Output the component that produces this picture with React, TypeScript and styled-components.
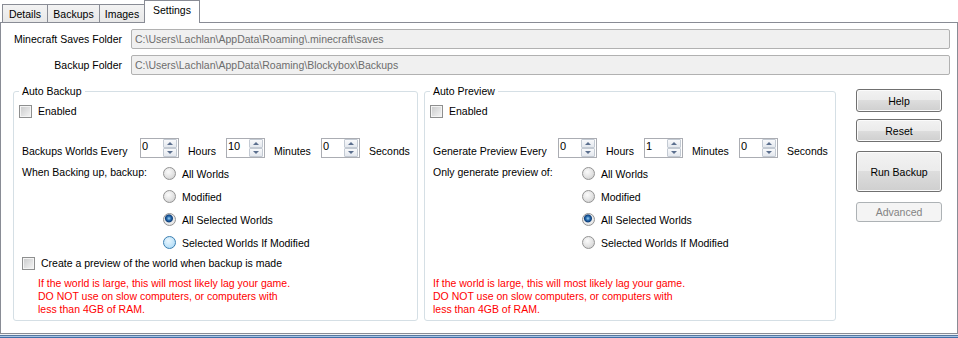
import React from 'react';
import styled, { createGlobalStyle, css } from 'styled-components';

const FONT_SIZE = '10.5px';

const GlobalStyle = createGlobalStyle`
  html, body { margin: 0; padding: 0; background: #fff; }
  body { font-family: "Liberation Sans", Arial, sans-serif; font-size: ${FONT_SIZE}; color: #000; }
  * { box-sizing: border-box; }
`;

const Window = styled.div`
  width: 958px;
  height: 338px;
  background: #fff;
  display: flex;
  flex-direction: column;
  overflow: hidden;
`;

const TabStrip = styled.div`
  height: 22px;
  display: flex;
  align-items: flex-end;
  padding-left: 2px;
  position: relative;
  z-index: 1;
`;

const Tab = styled.div<{ $active?: boolean; $w: number }>`
  width: ${p => p.$w}px;
  height: 18px;
  margin-left: -1px;
  border: 1px solid #898c95;
  border-bottom: none;
  background: linear-gradient(#f3f3f3, #e8e8e8);
  display: flex;
  align-items: center;
  justify-content: center;
  line-height: 13px;
  padding-top: 1px;
  &:first-child { margin-left: 0; }
  ${p =>
    p.$active &&
    css`
      height: 23px;
      margin-bottom: -1px;
      background: #fff;
      padding-top: 0;
      padding-bottom: 3px;
    `}
`;

const Panel = styled.div`
  height: 312px;
  border: 1px solid #898c95;
  padding: 6px 7px 12px 12px;
  display: flex;
  flex-direction: column;
`;

const FieldGrid = styled.div`
  display: grid;
  grid-template-columns: 109px 1fr;
  column-gap: 9px;
  row-gap: 6px;
`;

const FieldLabel = styled.div`
  line-height: 20px;
  text-align: right;
  white-space: nowrap;
`;

const PathBox = styled.div`
  height: 20px;
  border: 1px solid #b1b1b1;
  border-radius: 2px;
  background: #f0f0f0;
  color: #6d6d6d;
  padding-left: 3px;
  line-height: 18px;
  white-space: nowrap;
`;

const MainRow = styled.div`
  margin-top: 10px;
  flex: 1;
  display: flex;
  align-items: stretch;
`;

const GroupBox = styled.fieldset<{ $w: number; $ml?: number }>`
  width: ${p => p.$w}px;
  margin: 0 0 0 ${p => p.$ml ?? 0}px;
  padding: 0 0 4px 0;
  min-width: 0;
  border: 1px solid #d5dfe5;
  border-radius: 3px;
  display: flex;
  flex-direction: column;
`;

const Legend = styled.legend`
  margin-left: 5px;
  padding: 0 3px;
  line-height: 13px;
  font-size: ${FONT_SIZE};
`;

const CheckRow = styled.label<{ $mt: number; $pl: number }>`
  display: flex;
  align-items: center;
  gap: 6px;
  height: 13px;
  line-height: 13px;
  margin-top: ${p => p.$mt}px;
  padding-left: ${p => p.$pl}px;
  white-space: nowrap;
`;

const CheckBox = styled.span`
  width: 13px;
  height: 13px;
  flex: none;
  border: 1px solid #8e8f8f;
  background: linear-gradient(135deg, #c8c9ca, #f6f6f6);
  box-shadow: inset 0 0 0 1px #f4f4f4;
`;

const SpinRow = styled.div`
  display: flex;
  align-items: flex-start;
  margin-top: 20px;
  padding-left: 8px;
`;

const RowLabel = styled.div<{ $w: number; $lh?: number; $mt?: number }>`
  width: ${p => p.$w}px;
  flex: none;
  line-height: ${p => p.$lh ?? 13}px;
  margin-top: ${p => p.$mt ?? 0}px;
  white-space: nowrap;
`;

const Unit = styled.div<{ $w?: number }>`
  ${p => (p.$w ? `width: ${p.$w}px;` : '')}
  flex: none;
  margin-left: 9px;
  margin-top: 7px;
  line-height: 13px;
  white-space: nowrap;
`;

const Spinner = styled.div`
  width: 39px;
  height: 20px;
  flex: none;
  border: 1px solid #abadb3;
  background: #fff;
  display: flex;
`;

const SpinValue = styled.div`
  flex: 1;
  padding: 1px 0 0 1px;
  line-height: 13px;
  font-size: 11px;
`;

const SpinButtons = styled.div`
  width: 15px;
  padding: 0 1px 0 0;
  display: flex;
  flex-direction: column;
`;

const SpinHalf = styled.div<{ $down?: boolean }>`
  flex: 1;
  border: 1px solid #c3cad3;
  border-radius: 1px;
  background: linear-gradient(#f8f9fb, #e4e8ee);
  display: flex;
  align-items: center;
  justify-content: center;
  &::after {
    content: '';
    width: 0;
    height: 0;
    border-left: 3px solid transparent;
    border-right: 3px solid transparent;
    ${p =>
      p.$down
        ? 'border-top: 3px solid #5b6f8e;'
        : 'border-bottom: 3px solid #5b6f8e;'}
  }
`;

const RadioSection = styled.div`
  display: flex;
  align-items: flex-start;
  margin-top: 4px;
  padding-left: 8px;
`;

const RadioList = styled.div`
  display: flex;
  flex-direction: column;
`;

const RadioItem = styled.label`
  display: flex;
  align-items: center;
  gap: 6px;
  height: 23px;
  white-space: nowrap;
`;

const RadioDot = styled.span<{ $checked?: boolean; $hot?: boolean }>`
  width: 13px;
  height: 13px;
  flex: none;
  border-radius: 50%;
  border: 1px solid #939393;
  background: radial-gradient(circle at 40% 35%, #fbfbfb 0%, #e2e2e2 55%, #c6c6c6 100%);
  ${p =>
    p.$checked &&
    css`
      background: radial-gradient(circle at 45% 40%, #9ed4f5 0px, #2a6db0 2px, #0e3f7a 3.5px, #ececec 4.5px, #dedede 100%);
    `}
  ${p =>
    p.$hot &&
    css`
      border-color: #3c7fb1;
      background: radial-gradient(circle at 40% 35%, #eaf6fd 0%, #bfe3f9 60%, #9fd2f3 100%);
    `}
`;

const Warning = styled.div<{ $pl: number }>`
  margin-top: auto;
  padding-left: ${p => p.$pl}px;
  color: #ff0000;
  line-height: 13px;
  white-space: nowrap;
`;

const ButtonColumn = styled.div`
  width: 86px;
  margin-left: 20px;
  padding-top: 4px;
  display: flex;
  flex-direction: column;
`;

const Button = styled.button<{ $h: number; $mt?: number }>`
  height: ${p => p.$h}px;
  margin-top: ${p => p.$mt ?? 0}px;
  border: 1px solid #707070;
  border-radius: 3px;
  background: linear-gradient(#f2f2f2 0%, #ebebeb 50%, #dddddd 50%, #cfcfcf 100%);
  box-shadow: inset 0 0 0 1px #fbfbfb;
  font-family: "Liberation Sans", Arial, sans-serif;
  font-size: ${FONT_SIZE};
  font-weight: 400;
  color: #000;
  padding: 0;
  &:disabled {
    border-color: #adb2b5;
    background: #f4f4f4;
    box-shadow: none;
    color: #838383;
  }
`;

const FrameEdge = styled.div`
  height: 4px;
  flex: none;
  background: linear-gradient(
    #eef1f5 0px, #eef1f5 1px,
    #56789f 1px, #56789f 2px,
    #a8c3e3 2px, #a8c3e3 3px,
    #3f6fa8 3px, #3f6fa8 4px
  );
`;

type TimeSet = { h: string; m: string; s: string };

function TimeRow({ label, labelW, t }: { label: string; labelW: number; t: TimeSet }) {
  const spin = (v: string) => (
    <Spinner>
      <SpinValue>{v}</SpinValue>
      <SpinButtons>
        <SpinHalf />
        <SpinHalf $down />
      </SpinButtons>
    </Spinner>
  );
  return (
    <SpinRow>
      <RowLabel $w={labelW} $mt={7}>{label}</RowLabel>
      {spin(t.h)}
      <Unit $w={38}>Hours</Unit>
      {spin(t.m)}
      <Unit $w={47}>Minutes</Unit>
      {spin(t.s)}
      <Unit>Seconds</Unit>
    </SpinRow>
  );
}

function Choices({ label, labelW, hot }: { label: string; labelW: number; hot?: boolean }) {
  const opts = ['All Worlds', 'Modified', 'All Selected Worlds', 'Selected Worlds If Modified'];
  return (
    <RadioSection>
      <RowLabel $w={labelW} $lh={20}>{label}</RowLabel>
      <RadioList>
        {opts.map((o, i) => (
          <RadioItem key={o}>
            <RadioDot $checked={i === 2} $hot={hot && i === 3} />
            {o}
          </RadioItem>
        ))}
      </RadioList>
    </RadioSection>
  );
}

function WarningText({ pl }: { pl: number }) {
  return (
    <Warning $pl={pl}>
      If the world is large, this will most likely lag your game.
      <br />
      DO NOT use on slow computers, or computers with
      <br />
      less than 4GB of RAM.
    </Warning>
  );
}

export default function App() {
  return (
    <>
      <GlobalStyle />
      <Window>
        <TabStrip>
          <Tab $w={46}>Details</Tab>
          <Tab $w={53}>Backups</Tab>
          <Tab $w={46}>Images</Tab>
          <Tab $w={56} $active>Settings</Tab>
        </TabStrip>
        <Panel>
          <FieldGrid>
            <FieldLabel>Minecraft Saves Folder</FieldLabel>
            <PathBox>C:\Users\Lachlan\AppData\Roaming\.minecraft\saves</PathBox>
            <FieldLabel>Backup Folder</FieldLabel>
            <PathBox>C:\Users\Lachlan\AppData\Roaming\Blockybox\Backups</PathBox>
          </FieldGrid>
          <MainRow>
            <GroupBox $w={405}>
              <Legend>Auto Backup</Legend>
              <CheckRow $mt={7} $pl={5}>
                <CheckBox />
                Enabled
              </CheckRow>
              <TimeRow label="Backups Worlds Every" labelW={118} t={{ h: '0', m: '10', s: '0' }} />
              <Choices label="When Backing up, backup:" labelW={141} hot />
              <CheckRow $mt={3} $pl={8}>
                <CheckBox />
                Create a preview of the world when backup is made
              </CheckRow>
              <WarningText pl={24} />
            </GroupBox>
            <GroupBox $w={412} $ml={6}>
              <Legend>Auto Preview</Legend>
              <CheckRow $mt={7} $pl={5}>
                <CheckBox />
                Enabled
              </CheckRow>
              <TimeRow label="Generate Preview Every" labelW={125} t={{ h: '0', m: '1', s: '0' }} />
              <Choices label="Only generate preview of:" labelW={149} />
              <WarningText pl={8} />
            </GroupBox>
            <ButtonColumn>
              <Button $h={23}>Help</Button>
              <Button $h={23} $mt={7}>Reset</Button>
              <Button $h={41} $mt={9}>Run Backup</Button>
              <Button $h={20} $mt={10} disabled>Advanced</Button>
            </ButtonColumn>
          </MainRow>
        </Panel>
        <FrameEdge />
      </Window>
    </>
  );
}
